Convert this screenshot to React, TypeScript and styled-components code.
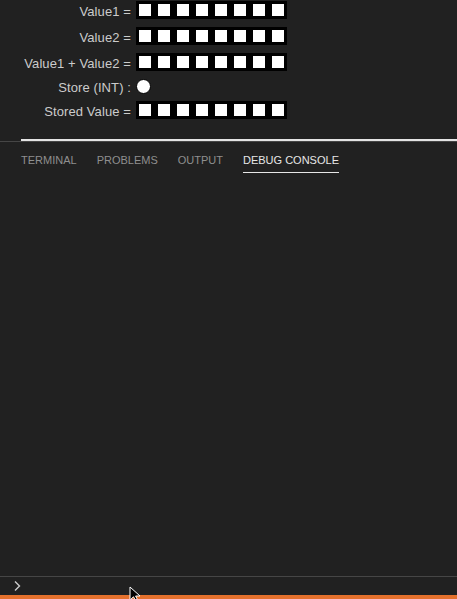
import React from "react";
import styled, { createGlobalStyle } from "styled-components";

const GlobalStyle = createGlobalStyle`
  html, body { margin: 0; padding: 0; background: #212121; }
  body { font-family: "Liberation Sans", Arial, sans-serif; overflow: hidden; }
  * { box-sizing: border-box; }
`;

const Page = styled.div`
  position: relative;
  width: 457px;
  height: 599px;
  display: flex;
  flex-direction: column;
  background: #212121;
  overflow: hidden;
`;

const Webview = styled.div`
  height: 139px;
  padding-top: 1px;
  display: grid;
  grid-template-columns: 131px auto;
  column-gap: 5px;
  row-gap: 8px;
  align-content: start;
  justify-content: start;
`;

const Label = styled.div<{ $top: number; $h: number }>`
  height: ${(p) => p.$h}px;
  padding-top: ${(p) => p.$top}px;
  line-height: 14px;
  font-size: 13px;
  color: #cccccc;
  text-align: right;
  white-space: nowrap;
  letter-spacing: 0.1px;
`;

const Cell = styled.div<{ $h: number }>`
  height: ${(p) => p.$h}px;
  display: flex;
  align-items: flex-start;
`;

const Register = styled.div`
  display: flex;
  gap: 7px;
  padding: 3px;
  height: 18px;
  background: #000;
`;

const Bit = styled.div`
  width: 12px;
  height: 12px;
  background: #fff;
`;

const Led = styled.div`
  width: 15px;
  height: 15px;
  border-radius: 50%;
  background: #fff;
  border: 1px solid #000;
`;

const Divider = styled.div`
  height: 3px;
  display: flex;
  align-items: flex-start;
  border-bottom: 1px solid #464646;
`;

const DividerGap = styled.div`
  width: 21px;
`;

const DividerLine = styled.div`
  flex: 1;
  height: 2px;
  background: #e4e4e4;
`;

const Panel = styled.div`
  flex: 1;
  display: flex;
  flex-direction: column;
  min-height: 0;
`;

const TabBar = styled.div`
  display: flex;
  height: 35px;
  padding-left: 11px;
  align-items: flex-start;
`;

const Tab = styled.div<{ $active?: boolean }>`
  padding: 10px 10px 0;
  font-size: 11px;
  line-height: 16px;
  color: ${(p) => (p.$active ? "#e7e7e7" : "#8f8f8f")};
`;

const TabText = styled.span<{ $active?: boolean }>`
  display: inline-block;
  padding-bottom: 4px;
  border-bottom: 1px solid ${(p) => (p.$active ? "#e7e7e7" : "transparent")};
`;

const Output = styled.div`
  flex: 1;
`;

const InputRow = styled.div`
  height: 19px;
  border-top: 1px solid #464646;
  display: flex;
  align-items: center;
  padding-left: 13px;
  color: #cccccc;
`;

const StatusBar = styled.div`
  height: 4px;
  background: #e5712d;
`;

const Cursor = styled.svg`
  position: absolute;
  left: 129px;
  top: 586px;
`;

const rows = [
  { label: "Value1 =", kind: "reg" },
  { label: "Value2 =", kind: "reg" },
  { label: "Value1 + Value2 =", kind: "reg" },
  { label: "Store (INT) :", kind: "led" },
  { label: "Stored Value =", kind: "reg" },
];

export default function App() {
  return (
    <>
      <GlobalStyle />
      <Page>
        <Webview>
          {rows.map((r) => {
            const led = r.kind === "led";
            return (
              <React.Fragment key={r.label}>
                <Label $top={led ? 2 : 4} $h={led ? 14 : 18}>
                  {r.label}
                </Label>
                <Cell $h={led ? 14 : 18}>
                  {led ? (
                    <Led />
                  ) : (
                    <Register>
                      {Array.from({ length: 8 }).map((_, i) => (
                        <Bit key={i} />
                      ))}
                    </Register>
                  )}
                </Cell>
              </React.Fragment>
            );
          })}
        </Webview>
        <Divider>
          <DividerGap />
          <DividerLine />
        </Divider>
        <Panel>
          <TabBar>
            {["TERMINAL", "PROBLEMS", "OUTPUT", "DEBUG CONSOLE"].map((t) => (
              <Tab key={t} $active={t === "DEBUG CONSOLE"}>
                <TabText $active={t === "DEBUG CONSOLE"}>{t}</TabText>
              </Tab>
            ))}
          </TabBar>
          <Output />
          <InputRow>
            <svg width="9" height="12" viewBox="0 0 9 12">
              <path d="M2 1.5 L6.5 6 L2 10.5" fill="none" stroke="#cccccc" strokeWidth="1.4" />
            </svg>
          </InputRow>
          <StatusBar />
        </Panel>
        <Cursor width="14" height="16" viewBox="0 0 14 16">
          <path d="M1 1 L1 14 L4.5 10.8 L7 15.5 L9 14.5 L6.6 10 L11 10 Z" fill="#000" stroke="#fff" strokeWidth="1" />
        </Cursor>
      </Page>
    </>
  );
}
